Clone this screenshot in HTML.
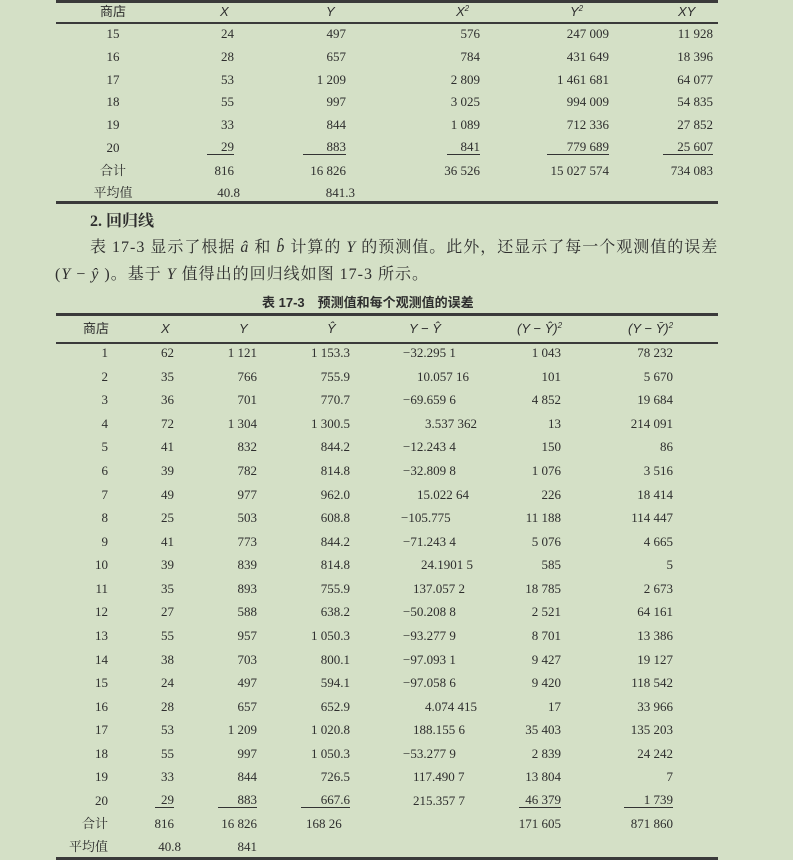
<!DOCTYPE html>
<html><head><meta charset="utf-8"><style>
body{margin:0;background:#d4e0c6;}
#p{position:relative;width:793px;height:860px;overflow:hidden;background:#d4e0c6;color:#2e2e2e;font-family:"Liberation Serif","Noto Serif CJK SC",serif;font-size:13px;}
.l{position:absolute;background:#3a3a3a;}
.r{position:absolute;left:0;width:793px;height:16px;line-height:16px;}
.r span{position:absolute;white-space:nowrap;}
.h{font-family:"Liberation Sans","Noto Sans CJK SC",sans-serif;font-size:13px;}
sup{line-height:0;vertical-align:5px;font-size:8px;}
.i{font-style:italic;}
.u{border-bottom:1px solid #333;padding-left:14px;line-height:14px;}
.t1 .a{left:73px;width:80px;text-align:center}
.t1 .b{right:559px}.t1 .c{right:447px}.t1 .d{right:313px}.t1 .e{right:184px}.t1 .f{right:80px}
.t2 .a{right:685px}.t2 .b{right:619px}.t2 .c{right:536px}.t2 .d{right:443px}
.t2 .f{right:232px}.t2 .g{right:120px}
.txt{position:absolute;font-size:16px;white-space:nowrap;font-family:"Liberation Serif","Noto Serif CJK SC",serif;}
</style></head><body><div id="p">
<div class="l" style="left:56px;top:0;width:662px;height:3px"></div>
<div class="l" style="left:56px;top:22px;width:662px;height:1.5px"></div>
<div class="r t1 h" style="top:4px">
<span class="a">商店</span><span class="i" style="left:220px">X</span><span class="i" style="left:326px">Y</span><span class="i" style="left:456px">X<sup>2</sup></span><span class="i" style="left:570px">Y<sup>2</sup></span><span class="i" style="left:678px">XY</span></div>
<div class="r t1" style="top:26px"><span class="a">15</span><span class="b">24</span><span class="c">497</span><span class="d">576</span><span class="e">247 009</span><span class="f">11 928</span></div>
<div class="r t1" style="top:49px"><span class="a">16</span><span class="b">28</span><span class="c">657</span><span class="d">784</span><span class="e">431 649</span><span class="f">18 396</span></div>
<div class="r t1" style="top:72px"><span class="a">17</span><span class="b">53</span><span class="c">1 209</span><span class="d">2 809</span><span class="e">1 461 681</span><span class="f">64 077</span></div>
<div class="r t1" style="top:94px"><span class="a">18</span><span class="b">55</span><span class="c">997</span><span class="d">3 025</span><span class="e">994 009</span><span class="f">54 835</span></div>
<div class="r t1" style="top:117px"><span class="a">19</span><span class="b">33</span><span class="c">844</span><span class="d">1 089</span><span class="e">712 336</span><span class="f">27 852</span></div>
<div class="r t1" style="top:140px"><span class="a">20</span><span class="b u">29</span><span class="c u" style="padding-left:24px">883</span><span class="d u">841</span><span class="e u" style="padding-left:20px">779 689</span><span class="f u">25 607</span></div>
<div class="r t1" style="top:163px"><span class="a">合计</span><span class="b">816</span><span class="c">16 826</span><span class="d">36 526</span><span class="e">15 027 574</span><span class="f">734 083</span></div>
<div class="r t1" style="top:185px"><span class="a">平均值</span><span class="b" style="right:553px">40.8</span><span class="c" style="right:438px">841.3</span></div>
<div class="l" style="left:56px;top:201px;width:662px;height:3px"></div>
<div class="txt" style="left:90px;top:208px;font-weight:bold;font-size:16px">2. 回归线</div>
<div class="txt" style="left:90px;top:234px;letter-spacing:1.0px">表 17-3 显示了根据 <i>â</i> 和 <i>b̂</i> 计算的 <i>Y</i> 的预测值。此外，还显示了每一个观测值的误差</div>
<div class="txt" style="left:55px;top:261px;letter-spacing:1.0px">(<i>Y</i> − <i>ŷ</i> )。基于 <i>Y</i> 值得出的回归线如图 17-3 所示。</div>
<div class="txt" style="left:262px;top:292px;font-size:13px;font-weight:bold;font-family:'Liberation Sans','Noto Sans CJK SC',sans-serif">表 17-3　预测值和每个观测值的误差</div>
<div class="l" style="left:56px;top:313px;width:662px;height:2.5px"></div>
<div class="l" style="left:56px;top:342px;width:662px;height:1.5px"></div>
<div class="r h" style="top:321px">
<span style="left:83px">商店</span><span class="i" style="left:161px">X</span><span class="i" style="left:239px">Y</span><span class="i" style="left:327px">Ŷ</span><span class="i" style="left:409px">Y − Ŷ</span><span class="i" style="left:517px">(Y − Ŷ)<sup>2</sup></span><span class="i" style="left:628px">(Y − Ȳ)<sup>2</sup></span></div>
<div class="r t2" style="top:345px"><span class="a">1</span><span class="b">62</span><span class="c">1 121</span><span class="d">1 153.3</span><span style="left:403px">−32.295 1</span><span class="f">1 043</span><span class="g">78 232</span></div>
<div class="r t2" style="top:369px"><span class="a">2</span><span class="b">35</span><span class="c">766</span><span class="d">755.9</span><span style="left:417px">10.057 16</span><span class="f">101</span><span class="g">5 670</span></div>
<div class="r t2" style="top:392px"><span class="a">3</span><span class="b">36</span><span class="c">701</span><span class="d">770.7</span><span style="left:403px">−69.659 6</span><span class="f">4 852</span><span class="g">19 684</span></div>
<div class="r t2" style="top:416px"><span class="a">4</span><span class="b">72</span><span class="c">1 304</span><span class="d">1 300.5</span><span style="left:425px">3.537 362</span><span class="f">13</span><span class="g">214 091</span></div>
<div class="r t2" style="top:439px"><span class="a">5</span><span class="b">41</span><span class="c">832</span><span class="d">844.2</span><span style="left:403px">−12.243 4</span><span class="f">150</span><span class="g">86</span></div>
<div class="r t2" style="top:463px"><span class="a">6</span><span class="b">39</span><span class="c">782</span><span class="d">814.8</span><span style="left:403px">−32.809 8</span><span class="f">1 076</span><span class="g">3 516</span></div>
<div class="r t2" style="top:487px"><span class="a">7</span><span class="b">49</span><span class="c">977</span><span class="d">962.0</span><span style="left:417px">15.022 64</span><span class="f">226</span><span class="g">18 414</span></div>
<div class="r t2" style="top:510px"><span class="a">8</span><span class="b">25</span><span class="c">503</span><span class="d">608.8</span><span style="left:401px">−105.775</span><span class="f">11 188</span><span class="g">114 447</span></div>
<div class="r t2" style="top:534px"><span class="a">9</span><span class="b">41</span><span class="c">773</span><span class="d">844.2</span><span style="left:403px">−71.243 4</span><span class="f">5 076</span><span class="g">4 665</span></div>
<div class="r t2" style="top:557px"><span class="a">10</span><span class="b">39</span><span class="c">839</span><span class="d">814.8</span><span style="left:421px">24.1901 5</span><span class="f">585</span><span class="g">5</span></div>
<div class="r t2" style="top:581px"><span class="a">11</span><span class="b">35</span><span class="c">893</span><span class="d">755.9</span><span style="left:413px">137.057 2</span><span class="f">18 785</span><span class="g">2 673</span></div>
<div class="r t2" style="top:604px"><span class="a">12</span><span class="b">27</span><span class="c">588</span><span class="d">638.2</span><span style="left:403px">−50.208 8</span><span class="f">2 521</span><span class="g">64 161</span></div>
<div class="r t2" style="top:628px"><span class="a">13</span><span class="b">55</span><span class="c">957</span><span class="d">1 050.3</span><span style="left:403px">−93.277 9</span><span class="f">8 701</span><span class="g">13 386</span></div>
<div class="r t2" style="top:652px"><span class="a">14</span><span class="b">38</span><span class="c">703</span><span class="d">800.1</span><span style="left:403px">−97.093 1</span><span class="f">9 427</span><span class="g">19 127</span></div>
<div class="r t2" style="top:675px"><span class="a">15</span><span class="b">24</span><span class="c">497</span><span class="d">594.1</span><span style="left:403px">−97.058 6</span><span class="f">9 420</span><span class="g">118 542</span></div>
<div class="r t2" style="top:699px"><span class="a">16</span><span class="b">28</span><span class="c">657</span><span class="d">652.9</span><span style="left:425px">4.074 415</span><span class="f">17</span><span class="g">33 966</span></div>
<div class="r t2" style="top:722px"><span class="a">17</span><span class="b">53</span><span class="c">1 209</span><span class="d">1 020.8</span><span style="left:413px">188.155 6</span><span class="f">35 403</span><span class="g">135 203</span></div>
<div class="r t2" style="top:746px"><span class="a">18</span><span class="b">55</span><span class="c">997</span><span class="d">1 050.3</span><span style="left:403px">−53.277 9</span><span class="f">2 839</span><span class="g">24 242</span></div>
<div class="r t2" style="top:769px"><span class="a">19</span><span class="b">33</span><span class="c">844</span><span class="d">726.5</span><span style="left:413px">117.490 7</span><span class="f">13 804</span><span class="g">7</span></div>
<div class="r t2" style="top:793px"><span class="a">20</span><span class="b u" style="padding-left:6px">29</span><span class="c u" style="padding-left:20px">883</span><span class="d u" style="padding-left:20px">667.6</span><span style="left:413px">215.357 7</span><span class="f u" style="padding-left:6px">46 379</span><span class="g u" style="padding-left:20px">1 739</span></div>
<div class="r t2" style="top:816px"><span class="a">合计</span><span class="b">816</span><span class="c">16 826</span><span style="left:306px">168 26</span><span class="f">171 605</span><span class="g">871 860</span></div>
<div class="r t2" style="top:839px"><span class="a">平均值</span><span class="b" style="right:612px">40.8</span><span class="c">841</span></div>
<div class="l" style="left:56px;top:857px;width:662px;height:3px"></div>
</div></body></html>
